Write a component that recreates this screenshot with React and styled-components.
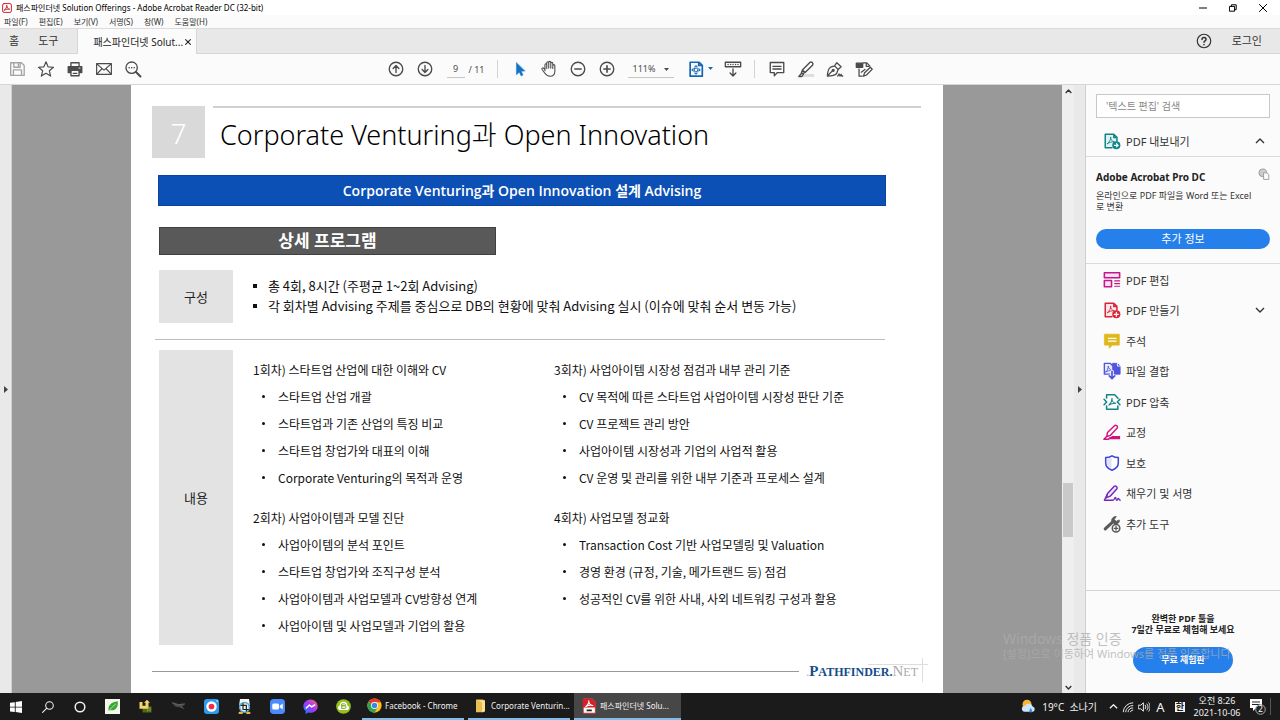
import React from 'react';
import styled, { createGlobalStyle, css } from 'styled-components';

const GlobalStyle = createGlobalStyle`
  * {
    box-sizing: border-box;
  }

  body {
    margin: 0;
    color: #222;
    background: #fff;
    font-family: "Noto Sans", "Noto Sans CJK KR", sans-serif;
    font-size: 11px;
  }

  button, input, select {
    margin: 0;
    padding: 0;
    border: 0;
    border-radius: 0;
    background: none;
    color: inherit;
    font: inherit;
    outline: none;
  }

  ul, h1, h2, h3, p {
    margin: 0;
    padding: 0;
    font: inherit;
    list-style: none;
  }

  svg {
    display: block;
    flex: none;
  }
`;

function Icon({ size = 18, children, ...rest }) {
  return (
    <svg width={size} height={size} viewBox="0 0 20 20" fill="none" stroke="currentColor" strokeWidth="1.5" strokeLinejoin="round" strokeLinecap="round" aria-hidden="true" {...rest}>
      {children}
    </svg>
  );
}

const icons = {
  save: (
    <Icon color="#a4a4a4">
      <path d="M3 3h12l3 3v11H3zM6.500 3v5h7V3M6 17v-6h9v6M11.500 4.500v2" />
    </Icon>
  ),
  star: (
    <Icon>
      <path d="M10 2l2.300 5.600 6 .5-4.600 3.900 1.500 5.900L10 14.700 4.800 17.900l1.500-5.900L1.700 8.100l6-.5z" strokeWidth="1.300" />
    </Icon>
  ),
  print: (
    <Icon>
      <path d="M2.500 7.500h15v6.500H15v-2.500H5V14H2.500z" fill="currentColor" />
      <path d="M5.500 7V3h9v4M5.500 12v5.500h9V12M8 14.800h4" />
      <path d="M14.500 9h1" stroke="#fff" strokeWidth="1" />
    </Icon>
  ),
  mail: (
    <Icon>
      <path d="M1.800 4h16.400v12H1.800zM2 4.300l8 7 8-7M2 15.700l5.700-6M18 15.700l-5.700-6" strokeWidth="1.300" />
    </Icon>
  ),
  find: (
    <Icon>
      <circle cx="8.500" cy="8.500" r="6.300" />
      <path d="M13.300 13.300l5 5" strokeWidth="2.200" />
      <path d="M5.700 8.500h.1M8.500 8.500h.1M11.300 8.500h.1" strokeWidth="1.700" />
    </Icon>
  ),
  up: (
    <Icon>
      <circle cx="10" cy="10" r="7.500" />
      <path d="M10 14V6.500M6.800 9.500L10 6.200l3.200 3.300" />
    </Icon>
  ),
  down: (
    <Icon>
      <circle cx="10" cy="10" r="7.500" />
      <path d="M10 6v7.500M6.800 10.500l3.200 3.300 3.200-3.300" />
    </Icon>
  ),
  pointer: (
    <Icon color="#1473c8">
      <path d="M6 3v13.500l3.200-3 2 4.200 2.200-1-2-4.200 4-.3z" fill="currentColor" strokeWidth=".5" />
    </Icon>
  ),
  hand: (
    <Icon>
      <path d="M5.500 12V5.500c0-1.700 2-1.700 2 0V9.500M7.500 9V3.300c0-1.700 2.200-1.700 2.200 0V9M9.700 9V2.800c0-1.700 2.300-1.700 2.300 0V9M12 9V3.800c0-1.600 2.200-1.600 2.200 0V9.500M14.200 9V6.300c0-1.600 2.300-1.600 2.300 0V12.500c0 3.500-2 5.500-5.300 5.500-3.200 0-4.500-1.300-6-3.500L2.300 10.500c-.8-1.300.8-2.300 1.900-1.200l1.300 1.500" strokeWidth="1.200" />
    </Icon>
  ),
  minus: (
    <Icon>
      <circle cx="10" cy="10" r="7.500" />
      <path d="M6.500 10h7" strokeWidth="1.800" />
    </Icon>
  ),
  plus: (
    <Icon>
      <circle cx="10" cy="10" r="7.500" />
      <path d="M6.500 10h7M10 6.500v7" strokeWidth="1.800" />
    </Icon>
  ),
  fit: (
    <Icon>
      <path d="M3.500 2.500h10l3.500 3.500v12H3.500zM13 2.500V6h4" strokeWidth="1.900" />
      <path d="M8.500 7.500L10 5.800l1.500 1.700zM8.500 14.500l1.500 1.700 1.500-1.700zM6.800 9.500L5 11l1.800 1.500zM13.200 9.500L15 11l-1.800 1.500z" fill="currentColor" strokeWidth=".6" />
      <path d="M8.300 9.300h3.400v3.400H8.300z" strokeWidth="1" strokeDasharray="1.500 1" />
    </Icon>
  ),
  scroll: (
    <Icon>
      <path d="M1.500 2.500h17v5h-17zM10 10v7.500M6.800 14.500L10 17.800l3.200-3.300" />
      <path d="M4.500 5h.1M7.300 5h.1M10 5h.1M12.800 5h.1M15.500 5h.1" />
    </Icon>
  ),
  comment: (
    <Icon>
      <path d="M2.500 2.800h15v11.200h-7L7 17.500V14H2.500zM5.500 7h9M5.500 10h9" />
    </Icon>
  ),
  marker: (
    <Icon>
      <path d="M9 15.500h10v3.500H6z" fill="#dedede" stroke="none" />
      <path d="M6 11L14.500 2.500c1.500-1 4 1 3 3L9 14l-4.500 1.500zM6 11l3 3M5 14.800L2 18.300h3.500l1.800-2.500" />
    </Icon>
  ),
  sign: (
    <Icon>
      <path d="M1.500 17.800C1.800 13 2.500 9.500 5 8l4.500-1.500 4 4-1.700 4.500c-1.800 2.300-6 2.800-10.300 2.800zM1.800 17.500l5.500-5.700M9.500 6.500L12 3l4.800 4.500-3.300 3" strokeWidth="1.400" />
      <path d="M13 17.800l1.500-2.200 1 2.200 1.300-1.800.7 1.800h1" />
      <circle cx="8" cy="11.500" r="1" fill="currentColor" />
    </Icon>
  ),
  edit: (
    <Icon>
      <path d="M1.500 3.500h7v4.500h-7z" fill="currentColor" />
      <path d="M9 3.200h4l3.500 3.300M12.500 3.500V7h3M4.500 10v8H8M9.500 18l1-3.500L17 8l2.200 2.200-6.400 6.500zM11 10.500l-4 3" strokeWidth="1.400" />
    </Icon>
  ),
  help: (
    <Icon size="18" strokeWidth="1.300">
      <circle cx="10" cy="10" r="7.500" />
      <path d="M7.800 8.200c0-3 4.500-2.700 4.500 0 0 1.600-2.300 1.700-2.300 3.300M10 14v.1" strokeWidth="1.700" />
    </Icon>
  ),
};

const toolIcons = {
  exportPdf: (
    <Icon color="#12848a">
      <path d="M10 17.500H2.500v-15H12l3.500 3.500v4M12 2.500V6h3.500" fill="#dff2f1" strokeWidth="1.700" />
      <path d="M5 13c2-2 4-5 3.500-7.500C8 8 10 10.500 12.500 11c-3-.5-5 .5-7.500 2z" strokeWidth="1" />
      <circle cx="14.800" cy="14.800" r="4.500" fill="currentColor" stroke="none" />
      <path d="M12.700 14.800h4M15 13l1.800 1.800-1.800 1.800" stroke="#fff" strokeWidth="1.300" />
    </Icon>
  ),
  editPdf: (
    <Icon color="#c2188b">
      <path d="M1.500 2h17v5.500h-17z" fill="#f7e0ef" strokeWidth="1.700" />
      <path d="M1.500 10.500h8v7h-8z" fill="#f7e0ef" strokeWidth="1.700" />
      <path d="M13 11h5.500M13 14h5.500M13 17h5.500" strokeWidth="1.200" />
    </Icon>
  ),
  createPdf: (
    <Icon color="#d7263a">
      <path d="M10 17.500H2.500v-15H12l3.500 3.500v4M12 2.500V6h3.500" fill="#fbe7e8" strokeWidth="1.700" />
      <path d="M5 13c2-2 4-5 3.500-7.500C8 8 10 10.500 12.500 11c-3-.5-5 .5-7.500 2z" strokeWidth="1" />
      <circle cx="14.800" cy="14.800" r="4.500" fill="currentColor" stroke="none" />
      <path d="M12.500 14.800h4.600M14.800 12.500v4.600" stroke="#fff" strokeWidth="1.300" />
    </Icon>
  ),
  note: (
    <Icon color="#e0b81c">
      <path d="M2 2.500h16v12h-7.500L7 18v-3.500H2z" fill="currentColor" strokeWidth="1" />
      <path d="M6 7h8.500M6 10.200h8.500" stroke="#fff" strokeWidth="1.300" />
    </Icon>
  ),
  combine: (
    <Icon color="#4f55df">
      <path d="M11 1.500h5l3 3v9h-8z" fill="currentColor" strokeWidth="1" />
      <path d="M16 1v3.500h3.500" stroke="#fbfbfb" strokeWidth="1" />
      <path d="M1.500 1.500H8l3 3V13.500H1.500z" fill="#e8e9fb" />
      <path d="M3 11c2-2 3-4 2.800-6.500C6 7 8 9 10 9.500c-3-.2-5 .5-7 1.500z" strokeWidth="1" />
      <path d="M10 10.500v8M7 16l3 3 3-3" stroke="#fbfbfb" strokeWidth="4" />
      <path d="M10 10.500v8M7 15.500l3 3 3-3" strokeWidth="1.900" />
    </Icon>
  ),
  compress: (
    <Icon color="#12848a">
      <path d="M4 5.500V2h9l3.500 3.500V6M4 14.500V18h12.500v-3.500" strokeWidth="1.700" />
      <path d="M1.200 7L4 10l-2.800 3M18.800 7L16 10l2.800 3" strokeWidth="1.700" />
      <path d="M6.500 13.500c2-2 3.700-5 3.500-7.500-.2 2.500 1.500 5 4 5.500-3-.5-5 .5-7.500 2z" strokeWidth="1.200" />
    </Icon>
  ),
  redact: (
    <Icon color="#d0127d">
      <path d="M10 14.500h9V18H6z" fill="currentColor" stroke="none" />
      <path d="M5 10.500L13 2.800c1.500-1 3.800.7 2.800 2.700L8 13.800l-3.800 1.400zM4 15l-3 3h5l2-2" strokeWidth="1.600" />
    </Icon>
  ),
  shield: (
    <Icon color="#3f46ce">
      <path d="M10 2c2.500 1.600 4.500 2 7 2v6c0 4-3 6.500-7 8-4-1.500-7-4-7-8V4c2.500 0 4.500-.4 7-2z" fill="#fff" strokeWidth="1.700" />
      <path d="M9.500 3.800v12.300C6.500 14.800 4.300 13 4.300 10V5.200c2-.1 3.600-.5 5.200-1.400z" fill="#dfe0fa" stroke="none" />
    </Icon>
  ),
  fill: (
    <Icon color="#7326ba">
      <path d="M5 10.500L12.500 2.500c1.500-1 4 .8 3 2.800L8 13.500l-4.500 2z" fill="#f0e5fa" strokeWidth="1.600" />
      <path d="M4.500 12L1.500 18H11c2 0 1.500-3 2.800-3 1.200 0 0 3 1.500 3s.8-2 1.800-2 .4 2 2 2" strokeWidth="1.500" />
    </Icon>
  ),
  wrench: (
    <Icon color="#595959">
      <path d="M2.500 15.500L10 8.500" strokeWidth="3.500" />
      <path d="M10 8.500C8.500 5 11 1.500 14.800 1.800L12.500 4.800l2.200 2.400 3.300-1.700c.6 3-2 5.200-5 4.800" fill="currentColor" strokeWidth="1" />
      <circle cx="14.500" cy="14.800" r="4.200" fill="#fbfbfb" strokeWidth="1.700" />
      <path d="M12.500 14.800h4M14.500 12.800v4" />
    </Icon>
  ),
};

const AcrobatLogo = ({ size = 10 }) => (
  <Icon size={size} color="#d3222a">
    <rect x="1.200" y="1.200" width="17.600" height="17.600" rx="3" fill="#fff" strokeWidth="2" />
    <path d="M4.500 14.500c3-2 5.500-6.500 5-10-.3 4 2.500 8 6 8-4 -.8-7.500 0-11 2z" strokeWidth="2" />
  </Icon>
);

const AcrobatFile = () => (
  <Icon size="16" color="#d3222a">
    <path d="M3 1h11l4 4v14H3z" fill="#fff" stroke="#c22" strokeWidth="1" />
    <path d="M2.500 1H14l4 4v7H2.500z" fill="currentColor" stroke="none" />
    <path d="M6 10.500c2.500-1.500 4-4.500 3.700-7 0 3 2 5.500 5 5.800-3-.5-6 0-8.700 1.200z" stroke="#fff" strokeWidth="1.400" />
    <path d="M7 15.500h6.500" stroke="#222" strokeWidth="2.200" strokeLinecap="butt" />
  </Icon>
);

const Caret = () => (
  <svg width="5" height="4" viewBox="0 0 5 4" fill="currentColor" aria-hidden="true"><path d="M0 0h5L2.500 3z" /></svg>
);

const Chevron = ({ up, size = 10 }) => (
  <Icon size={size} strokeWidth={size < 9 ? 4 : 2.8} strokeLinecap="butt">
    <path d={up ? 'M2 14l8-8 8 8' : 'M2 6l8 8 8-8'} />
  </Icon>
);

const Triangle = () => (
  <svg width="4" height="7" viewBox="0 0 4 7" fill="currentColor" aria-hidden="true">
    <path d="M0 0v7l4-3.500z" />
  </svg>
);

/* window frame */

const Window = styled.div`
  position: relative;
  min-height: 100vh;
  display: flex;
  flex-direction: column;
`;

const TitleBar = styled.header`
  height: 15px;
  padding: 0 12px 0 2px;
  display: flex;
  align-items: center;
  gap: 4px;
  font-size: 8px;
  line-height: 15px;
  color: #000;
`;

const WindowControls = styled.div`
  margin-left: auto;
  display: flex;
  gap: 20px;

  button {
    width: 10px;
    height: 14px;
    display: grid;
    place-items: center;
  }
`;

const MenuBar = styled.nav`
  height: 13px;
  padding-left: 4px;
  display: flex;
  align-items: center;
  gap: 11px;
  background: #fbfbfb;
  font-size: 8px;
  color: #333;

  button {
    line-height: 12px;
  }
`;

const TabBar = styled.div`
  height: 26px;
  padding-right: 18px;
  display: flex;
  background: #e8e8e8;
  border-top: 1px solid #dcdcdc;
  border-bottom: 1px solid #d6d6d6;
  color: #333;
`;

const Tab = styled.button`
  padding: 0 ${(props) => (props.$wide ? '19px' : '10px')} 0 9px;
  line-height: 22px;
`;

const DocTab = styled.div`
  width: 120px;
  margin-bottom: -1px;
  padding: 0 5px 0 15px;
  display: flex;
  align-items: center;
  justify-content: space-between;
  background: #fbfbfb;
  border: solid #d6d6d6;
  border-width: 0 1px;
  font-size: 10px;
  color: #222;

  button {
    line-height: 22px;
    white-space: nowrap;
  }
`;

const Account = styled.div`
  margin-left: auto;
  display: flex;
  align-items: center;
  gap: 19px;

  button {
    line-height: 22px;
  }
`;

const Toolbar = styled.div`
  height: 31px;
  padding: 0 22px 0 2px;
  display: grid;
  grid-template-columns: 1fr auto 1fr;
  background: #fbfbfb;
  border-bottom: 1px solid #d6d6d6;
  color: #4b4b4b;
`;

const ToolGroup = styled.div`
  display: flex;
  align-items: center;
`;

const ToolButton = styled.button`
  width: ${(props) => (props.$menu ? '36px' : '29px')};
  height: 29px;
  display: flex;
  align-items: center;
  justify-content: center;
  gap: 3px;
  color: ${(props) => (props.$menu ? '#1668b5' : 'inherit')};
`;

const Separator = styled.span`
  width: 1px;
  height: 18px;
  margin: 0 7px;
  background: #d4d4d4;
`;

const PageField = styled.label`
  margin: 0 6px 0 7px;
  display: flex;
  align-items: center;
  gap: 4px;
  font-size: 9px;
  white-space: nowrap;

  input {
    width: 18px;
    height: 18px;
    border-bottom: 1px solid #c6c6c6;
    text-align: center;
  }
`;

const ZoomField = styled.label`
  position: relative;
  margin: 0 8px 0 7px;

  select {
    width: 46px;
    height: 18px;
    padding-left: 4px;
    appearance: none;
    border-bottom: 1px solid #c6c6c6;
    font-size: 9px;
  }

  svg {
    position: absolute;
    right: 5px;
    top: 8px;
    pointer-events: none;
  }
`;

/* work area */

const Workspace = styled.div`
  flex: 1;
  display: flex;
`;

const Strip = styled.button`
  width: 12px;
  display: grid;
  place-items: center;
  background: #e9e9e9;
  border-right: 1px solid #d0d0d0;
  color: #444;
`;

const Canvas = styled.main`
  flex: 1;
  padding: 0 119px;
  display: flex;
  background: #999;
`;

const Slide = styled.article`
  flex: 1;
  padding: 21px 22px 0 21px;
  display: flex;
  flex-direction: column;
  background: #fff;
  color: #111;
`;

const SlideHeader = styled.header`
  display: flex;
  gap: 8px;
`;

const SlideNumber = styled.span`
  width: 53px;
  height: 52px;
  background: #d9d9d9;
  color: #fff;
  font-size: 28px;
  font-weight: 300;
  line-height: 54px;
  text-align: center;
`;

const SlideTitle = styled.h1`
  flex: 1;
  padding-left: 7px;
  border-top: 2px solid #d0d0d0;
  font-size: 27px;
  font-weight: 300;
  line-height: 54px;
  color: #000;
  white-space: nowrap;
`;

const Banner = styled.h2`
  margin: 13px 35px 0 6px;
  background: #0c4fb5;
  border: 1px solid #0a45a3;
  color: #fff;
  font-family: "Open Sans", "Noto Sans CJK KR", sans-serif;
  font-size: 14px;
  font-weight: 600;
  line-height: 29px;
  text-align: center;
`;

const SubBanner = styled.h3`
  width: 337px;
  margin: 21px 0 15px 7px;
  background: #595959;
  border: 1px solid #404040;
  color: #fff;
  font-size: 17px;
  font-weight: 700;
  line-height: 26px;
  text-align: center;
`;

const Section = styled.section`
  margin-left: 7px;
  display: flex;
  gap: 20px;
`;

const SectionLabel = styled.div`
  width: 74px;
  min-height: 53px;
  display: grid;
  place-items: center;
  background: #e3e3e3;
  font-size: 13px;
  color: #222;
`;

const Summary = styled.ul`
  padding-top: 6px;
  font-family: "Noto Sans CJK KR", sans-serif;
  font-size: 13px;
  line-height: 20px;

  li {
    display: flex;
    align-items: center;
    gap: 11px;
  }

  li::before {
    content: "";
    width: 4px;
    height: 4px;
    background: #111;
  }
`;

const Rule = styled.hr`
  width: 730px;
  height: 1px;
  margin: 16px 0 10px 3px;
  border: 0;
  background: #bdbdbd;
`;

const Sessions = styled.div`
  flex: 1;
  padding: 6px 0;
  display: grid;
  grid-template-columns: 301px 1fr;
  row-gap: 13px;
  font-family: "Noto Sans CJK KR", sans-serif;
  font-size: 12px;
  line-height: 27px;
  white-space: nowrap;

  li {
    padding-left: 9px;
    display: flex;
    align-items: center;
    gap: 13px;
  }

  li::before {
    content: "";
    width: 3px;
    height: 3px;
    border-radius: 50%;
    background: #111;
  }
`;

const SlideFooter = styled.footer`
  margin-top: 15px;
  display: flex;
  align-items: center;
  gap: 7px;

  &::before {
    content: "";
    flex: 1;
    height: 1px;
    background: #999;
  }
`;

const Brand = styled.span`
  position: relative;
  padding-right: 3px;
  font-family: "Liberation Serif", serif;
  font-size: 12px;
  font-weight: 700;
  line-height: 22px;
  color: #144c8c;

  big {
    font-size: 15px;
  }

  i {
    color: #aaa;
    font-style: normal;
    font-weight: 400;
  }

  svg {
    position: absolute;
    right: -7px;
    top: -2px;
  }
`;

const ScrollBar = styled.div`
  width: 12px;
  padding: 2px 1px;
  display: flex;
  flex-direction: column;
  align-items: center;
  background: #efefef;
  color: #333;

  button {
    height: 8px;
  }
`;

const Thumb = styled.span`
  width: 10px;
  height: 54px;
  background: #c9c9c9;
`;

const Space = styled.span`
  flex: ${(props) => props.$grow};
`;

/* tools pane */

const Pane = styled.aside`
  width: 194px;
  display: flex;
  flex-direction: column;
  background: #fbfbfb;
  color: #333;
`;

const SearchBox = styled.input`
  height: 24px;
  margin: 9px 10px 8px;
  padding: 0 9px;
  background: #fff;
  border: 1px solid #c8c8c8;
  font-size: 10px;

  &::placeholder {
    color: #888;
    opacity: 1;
  }
`;

const Tool = styled.button`
  width: 100%;
  height: 30px;
  padding: 0 15px 0 17px;
  display: flex;
  align-items: center;
  gap: 5px;
  font-size: 11px;
  text-align: left;

  span {
    flex: 1;
  }
`;

const ToolList = styled.ul`
  padding-top: 1px;

  li:nth-child(even) {
    padding-bottom: 1px;
  }
`;

const Pill = styled.button`
  height: ${(props) => (props.$small ? '26px' : '20px')};
  width: ${(props) => (props.$small ? '100px' : '100%')};
  border-radius: 13px;
  background: #2680eb;
  color: #fff;
  font-size: ${(props) => (props.$small ? '9px' : '11px')};
  line-height: 18px;
  font-weight: ${(props) => (props.$small ? 700 : 400)};
`;

const ProCard = styled.section`
  padding: 11px 10px 14px;
  border: solid #dadada;
  border-width: 1px 0;
  font-size: 9px;
  line-height: 11px;

  header {
    margin-bottom: 4px;
    display: flex;
    justify-content: space-between;
    font-size: 10px;
    font-weight: 700;
    line-height: 18px;
    color: #222;
  }

  ${Pill} {
    margin-top: 17px;
  }
`;

const Promo = styled.section`
  margin-top: auto;
  padding: 22px 0 20px;
  display: flex;
  flex-direction: column;
  align-items: center;
  gap: 12px;
  border-top: 1px solid #d4d4d4;

  p {
    font-size: 9px;
    font-weight: 700;
    line-height: 11px;
    text-align: center;
    color: #222;
  }
`;

const Watermark = styled.div`
  position: absolute;
  right: 52px;
  bottom: 59px;
  width: 225px;
  color: rgba(172, 172, 172, 0.75);
  font-size: 11px;
  line-height: 14px;
  white-space: nowrap;
  pointer-events: none;

  strong {
    display: block;
    font-size: 14px;
    font-weight: 400;
    line-height: 17px;
  }
`;

/* task bar */

const TaskBar = styled.footer`
  height: 27px;
  display: flex;
  background: #1b1b1b;
  color: #f2f2f2;
`;

const Launchers = styled.div`
  margin-right: 2px;
  display: flex;
`;

const Launcher = styled.button`
  width: ${(props) => (props.$system ? '32px' : '33px')};
  display: grid;
  place-items: center;
`;

const Task = styled.button`
  width: ${(props) => (props.$active ? '107px' : '102px')};
  margin-right: 4px;
  padding: 0 5px;
  display: flex;
  align-items: center;
  gap: 3px;
  border-bottom: 2px solid #83bce9;
  font-size: 8px;
  white-space: nowrap;

  ${(props) => props.$active && css`
    padding-left: 7px;
    background: #474747;
  `}
`;

const Tray = styled.div`
  margin-left: auto;
  padding-right: 2px;
  display: flex;
  align-items: center;
  gap: 4px;
  font-size: 10px;
`;

const Weather = styled.button`
  margin-right: 8px;
  display: flex;
  align-items: center;
  gap: 6px;
`;

const ImeMode = styled.span`
  width: 13px;
  font-size: 13px;
  text-align: center;
`;

const ImeHangul = styled.span`
  width: 10px;
  margin: 0 3px 0 4px;
  background: #f2f2f2;
  color: #1b1b1b;
  font-size: 9px;
  font-weight: 700;
  line-height: 10px;
  text-align: center;
`;

const Clock = styled.time`
  width: 50px;
  font-size: 9px;
  line-height: 12px;
  text-align: center;
`;

const Notice = styled.button`
  margin: 0 7px 0 3px;
  padding-right: 4px;
  border-right: 1px solid #555;
`;

const menus = ['파일(F)', '편집(E)', '보기(V)', '서명(S)', '창(W)', '도움말(H)'];

const sessions = [
  {
    title: '1회차) 스타트업 산업에 대한 이해와 CV',
    items: ['스타트업 산업 개괄', '스타트업과 기존 산업의 특징 비교', '스타트업 창업가와 대표의 이해', 'Corporate Venturing의 목적과 운영'],
  },
  {
    title: '3회차) 사업아이템 시장성 점검과 내부 관리 기준',
    items: ['CV 목적에 따른 스타트업 사업아이템 시장성 판단 기준', 'CV 프로젝트 관리 방안', '사업아이템 시장성과 기업의 사업적 활용', 'CV 운영 및 관리를 위한 내부 기준과 프로세스 설계'],
  },
  {
    title: '2회차) 사업아이템과 모델 진단',
    items: ['사업아이템의 분석 포인트', '스타트업 창업가와 조직구성 분석', '사업아이템과 사업모델과 CV방향성 연계', '사업아이템 및 사업모델과 기업의 활용'],
  },
  {
    title: '4회차) 사업모델 정교화',
    items: ['Transaction Cost 기반 사업모델링 및 Valuation', '경영 환경 (규정, 기술, 메가트랜드 등) 점검', '성공적인 CV를 위한 사내, 사외 네트워킹 구성과 활용'],
  },
];

const tools = [
  ['editPdf', 'PDF 편집'],
  ['createPdf', 'PDF 만들기'],
  ['note', '주석'],
  ['combine', '파일 결합'],
  ['compress', 'PDF 압축'],
  ['redact', '교정'],
  ['shield', '보호'],
  ['fill', '채우기 및 서명'],
  ['wrench', '추가 도구'],
];

const launchers = {
  leaf: (
    <>
      <path d="M0 0h20v20H0z" fill="#f4f7ee" stroke="none" />
      <path d="M5 16C3 8 9 4 17 3c1 8-3 13-10 12z" fill="#39a935" stroke="none" />
      <path d="M4 18c3-5 6-8 10-11" stroke="#d9f0c8" strokeWidth="1" />
    </>
  ),
  tool: (
    <>
      <path d="M6 10h12v8H6z" fill="#4f6b14" stroke="none" />
      <path d="M2 4h4v5h4V5H8l4-4 4 4h-2v8H2z" fill="#f3d66a" stroke="none" />
      <path d="M13 12v4M16 11v5" stroke="#9ab850" strokeWidth="1" />
    </>
  ),
  plane: (
    <>
      <path d="M1 5l9 2.500 9-1-4 3 3 4.500-6-3-6-1z" fill="#4c5054" stroke="none" />
      <path d="M2 5l8 2.500 8-1" stroke="#777" strokeWidth="1" />
    </>
  ),
  record: (
    <>
      <rect x="0" y="0" width="20" height="20" rx="4" fill="#2c9af0" stroke="none" />
      <circle cx="10" cy="10" r="7" fill="#fff" stroke="none" />
      <circle cx="10" cy="10" r="3.800" fill="#ef2f45" stroke="none" />
      <circle cx="17.500" cy="2.500" r="1" fill="#fff" stroke="none" />
    </>
  ),
  capture: (
    <>
      <path d="M4 0h12l1 7-2 3H5L3 7z" fill="#f5f5f5" stroke="none" />
      <path d="M3.500 18.500h3M16.500 18.500h-3" stroke="#f1b83d" strokeWidth="3" />
      <circle cx="10" cy="11" r="6.500" fill="#e8f5fb" stroke="#58a8c9" strokeWidth="2" />
      <path d="M8 6v8h7M5.500 8.500h7V16" stroke="#222" strokeWidth="1.600" />
    </>
  ),
  zoom: (
    <>
      <rect x="0" y="0" width="20" height="20" rx="5" fill="#4a8cff" stroke="none" />
      <rect x="3" y="6" width="9" height="8" rx="2" fill="#fff" stroke="none" />
      <path d="M13 9l4-3v8l-4-3z" fill="#fff" stroke="none" />
    </>
  ),
  messenger: (
    <>
      <defs>
        <linearGradient id="msg" x1="0" y1="1" x2="1" y2="0">
          <stop offset="0" stopColor="#0a8cff" />
          <stop offset=".5" stopColor="#a033ff" />
          <stop offset="1" stopColor="#ff6b6b" />
        </linearGradient>
      </defs>
      <path d="M10 0.500c-5.500 0-9.500 4-9.500 9 0 3 1.200 5 3 6.500V20l3.500-2c7 1.500 12.500-2.500 12.500-8.500 0-5-4-9-9.500-9z" fill="url(#msg)" stroke="none" />
      <path d="M4.500 12L8.500 8l3 2.500L15.500 8" stroke="#fff" strokeWidth="2" />
    </>
  ),
  green: (
    <>
      <circle cx="10" cy="10" r="9.800" fill="#93c01f" stroke="none" />
      <path d="M4.500 14.500a3.200 3.200 0 01.5-6 5 5 0 0110 0 3.200 3.200 0 01.5 6z" fill="#fff" stroke="none" />
      <path d="M8 6.500h3.500c1.500 0 1.500 2.500 0 2.500H8zM8 9h4c1.800 0 1.800 3.500 0 3.500H8z" stroke="#7da915" strokeWidth="1.300" />
    </>
  ),
};

const Chrome = () => (
  <Icon size="15" stroke="none">
    <circle cx="10" cy="10" r="9.500" fill="#fbc116" />
    <path d="M10 10L1.800 5.200A9.500 9.500 0 0118.300 5.500H10z" fill="#e33b2e" />
    <path d="M10 10l-8.200-4.800A9.500 9.500 0 0010 19.500l4-7z" fill="#31a350" />
    <circle cx="10" cy="10" r="4.600" fill="#fff" />
    <circle cx="10" cy="10" r="3.600" fill="#3f83ea" />
  </Icon>
);

const tool = (name, label) => (
  <ToolButton aria-label={label}>{icons[name]}</ToolButton>
);

function AppHeader() {
  return (
    <>
      <TitleBar>
        <AcrobatLogo />
        <span>패스파인더넷 Solution Offerings - Adobe Acrobat Reader DC (32-bit)</span>
        <WindowControls>
          <button aria-label="최소화"><Icon size="8" strokeWidth="2.500"><path d="M1 10h18" /></Icon></button>
          <button aria-label="이전 크기로"><Icon size="8" strokeWidth="2.500"><path d="M2 6h12v12H2zM6 6V2h12v12h-4" /></Icon></button>
          <button aria-label="닫기"><Icon size="8" strokeWidth="2.500"><path d="M1 1l18 18M19 1L1 19" /></Icon></button>
        </WindowControls>
      </TitleBar>
      <MenuBar>
        {menus.map((menu) => <button key={menu}>{menu}</button>)}
      </MenuBar>
      <TabBar>
        <Tab>홈</Tab>
        <Tab $wide>도구</Tab>
        <DocTab>
          <button>패스파인더넷 Solut...</button>
          <button aria-label="탭 닫기"><Icon size="6" strokeWidth="3.500"><path d="M2 2l16 16M18 2L2 18" /></Icon></button>
        </DocTab>
        <Account>
          <button aria-label="도움말">{icons.help}</button>
          <button>로그인</button>
        </Account>
      </TabBar>
      <Toolbar>
        <ToolGroup>
          {tool('save', '저장')}
          {tool('star', '별표')}
          {tool('print', '인쇄')}
          {tool('mail', '전자 메일')}
          {tool('find', '찾기')}
        </ToolGroup>
        <ToolGroup>
          {tool('up', '이전 페이지')}
          {tool('down', '다음 페이지')}
          <PageField>
            <input aria-label="페이지" defaultValue="9" />
            / 11
          </PageField>
          <Separator />
          {tool('pointer', '선택')}
          {tool('hand', '손')}
          {tool('minus', '축소')}
          {tool('plus', '확대')}
          <ZoomField>
            <select aria-label="배율" defaultValue="111%">
              <option>111%</option>
            </select>
            <Caret />
          </ZoomField>
          <ToolButton $menu aria-label="페이지 맞춤">
            {icons.fit}
            <Caret />
          </ToolButton>
          {tool('scroll', '스크롤')}
          <Separator />
          {tool('comment', '메모')}
          {tool('marker', '강조')}
          {tool('sign', '서명')}
          {tool('edit', '편집')}
        </ToolGroup>
      </Toolbar>
    </>
  );
}

function SlidePage() {
  return (
    <Slide>
      <SlideHeader>
        <SlideNumber>7</SlideNumber>
        <SlideTitle>Corporate Venturing과 Open Innovation</SlideTitle>
      </SlideHeader>
      <Banner>Corporate Venturing과 Open Innovation 설계 Advising</Banner>
      <SubBanner>상세 프로그램</SubBanner>
      <Section>
        <SectionLabel>구성</SectionLabel>
        <Summary>
          <li>총 4회, 8시간 (주평균 1~2회 Advising)</li>
          <li>각 회차별 Advising 주제를 중심으로 DB의 현황에 맞춰 Advising 실시 (이슈에 맞춰 순서 변동 가능)</li>
        </Summary>
      </Section>
      <Rule />
      <Section>
        <SectionLabel>내용</SectionLabel>
        <Sessions>
          {sessions.map((session) => (
            <div key={session.title}>
              <h3>{session.title}</h3>
              <ul>
                {session.items.map((item) => <li key={item}>{item}</li>)}
              </ul>
            </div>
          ))}
        </Sessions>
      </Section>
      <SlideFooter>
        <Brand>
          <svg width="60" height="24" stroke="#ddd" aria-hidden="true">
            <path d="M0 6.500h60M54.500 0v24" />
          </svg>
          <i>.</i>
          <big>P</big>
          ATHFINDER.
          <i>
            <big>N</big>
            ET
          </i>
        </Brand>
      </SlideFooter>
    </Slide>
  );
}

function ToolsPane() {
  return (
    <Pane>
      <SearchBox aria-label="도구 검색" placeholder="'텍스트 편집' 검색" />
      <Tool>
        {toolIcons.exportPdf}
        <span>PDF 내보내기</span>
        <Chevron up />
      </Tool>
      <ProCard>
        <header>
          Adobe Acrobat Pro DC
          <Icon size="12" color="#999">
            <circle cx="8" cy="8" r="6.500" fill="#ccc" />
            <path d="M10 8h5l3 3v8h-8z" fill="#fbfbfb" />
          </Icon>
        </header>
        <p>
          온라인으로 PDF 파일을 Word 또는 Excel
          <br />
          로 변환
        </p>
        <Pill>추가 정보</Pill>
      </ProCard>
      <ToolList>
        {tools.map(([icon, label]) => (
          <li key={icon}>
            <Tool>
              {toolIcons[icon]}
              <span>{label}</span>
              {icon === 'createPdf' && <Chevron />}
            </Tool>
          </li>
        ))}
      </ToolList>
      <Promo>
        <p>
          완벽한 PDF 툴을
          <br />
          7일간 무료로 체험해 보세요
        </p>
        <Pill $small>무료 체험판</Pill>
      </Promo>
    </Pane>
  );
}

function SystemBar() {
  return (
    <TaskBar>
      <Launchers>
        <Launcher $system aria-label="시작">
          <Icon size="12" stroke="none" fill="#fff"><path d="M0 3l8-1v7.500H0zM9.500 1.800L20 0v9.500H9.500zM0 10.800h8v7.500l-8-1zM9.500 10.800H20V20L9.500 18.400z" /></Icon>
        </Launcher>
        <Launcher $system aria-label="검색">
          <Icon size="12" strokeWidth="1.800"><circle cx="12.500" cy="7.500" r="6.300" /><path d="M8 12l-7 7" /></Icon>
        </Launcher>
        <Launcher $system aria-label="Cortana">
          <Icon size="12" strokeWidth="2.500"><circle cx="10" cy="10" r="8" /></Icon>
        </Launcher>
        {Object.entries(launchers).map(([name, drawing]) => (
          <Launcher key={name} aria-label={name}>
            <Icon size="15">{drawing}</Icon>
          </Launcher>
        ))}
      </Launchers>
      <Task>
        <Chrome />
        Facebook - Chrome
      </Task>
      <Task>
        <Icon size="15" stroke="none">
          <path d="M4 2h10v17H4z" fill="#e8bd52" />
          <path d="M6 3h10v15l-4 1V6z" fill="#fbe08f" />
        </Icon>
        Corporate Venturin...
      </Task>
      <Task $active>
        <AcrobatFile />
        패스파인더넷 Solu...
      </Task>
      <Tray>
        <Weather>
          <Icon size="15" stroke="none">
            <circle cx="8" cy="7" r="6" fill="#f7b733" />
            <path d="M5 17a4 4 0 01.5-8 5.500 5.500 0 0110 1A3.700 3.700 0 0116 17z" fill="#cfe6fa" />
            <path d="M13 12c2 2.500 2.500 6-.2 6s-2-3.500.2-6z" fill="#2a8fe8" />
          </Icon>
          <span>19°C&nbsp; 소나기</span>
        </Weather>
        <Chevron up size={9} />
        <Icon size="12" strokeWidth="1.600">
          <path d="M2 18A16 16 0 0118 3M6 18A12 12 0 0118 7.500M10 18a8 8 0 018-6.500M14 18a4 4 0 014-3" />
        </Icon>
        <Icon size="12" strokeWidth="1.600">
          <path d="M1 7h3.500L9 3v14l-4.500-4H1zM12 7c1.500 2 1.500 4 0 6M15 5c2.500 3 2.500 7 0 10M18 3c3 4 3 10 0 14" />
        </Icon>
        <ImeMode>A</ImeMode>
        <ImeHangul>한</ImeHangul>
        <Clock>
          오전 8:26
          <br />
          2021-10-06
        </Clock>
        <Notice aria-label="알림">
          <svg width="17" height="17" viewBox="0 0 17 17" fill="none">
            <path d="M1 1h12v9H7l-3 3v-3H1z" fill="#fff" />
            <path d="M3 4h8M3 6.500h8" stroke="#222" />
            <circle cx="11.500" cy="11.500" r="4.800" fill="#222" stroke="#aaa" />
            <text x="11.500" y="14.300" textAnchor="middle" fontSize="8" fill="#fff">2</text>
          </svg>
        </Notice>
      </Tray>
    </TaskBar>
  );
}

export default function App() {
  return (
    <Window>
      <GlobalStyle />
      <AppHeader />
      <Workspace>
        <Strip aria-label="탐색 창 열기"><Triangle /></Strip>
        <Canvas>
          <SlidePage />
        </Canvas>
        <ScrollBar>
          <button aria-label="위로"><Chevron up size={7} /></button>
          <Space $grow={388} />
          <Thumb />
          <Space $grow={146} />
          <button aria-label="아래로"><Chevron size={7} /></button>
        </ScrollBar>
        <Strip aria-label="도구 창 닫기"><Triangle /></Strip>
        <ToolsPane />
      </Workspace>
      <SystemBar />
      <Watermark>
        <strong>Windows 정품 인증</strong>
        [설정]으로 이동하여 Windows를 정품 인증합니다.
      </Watermark>
    </Window>
  );
}
